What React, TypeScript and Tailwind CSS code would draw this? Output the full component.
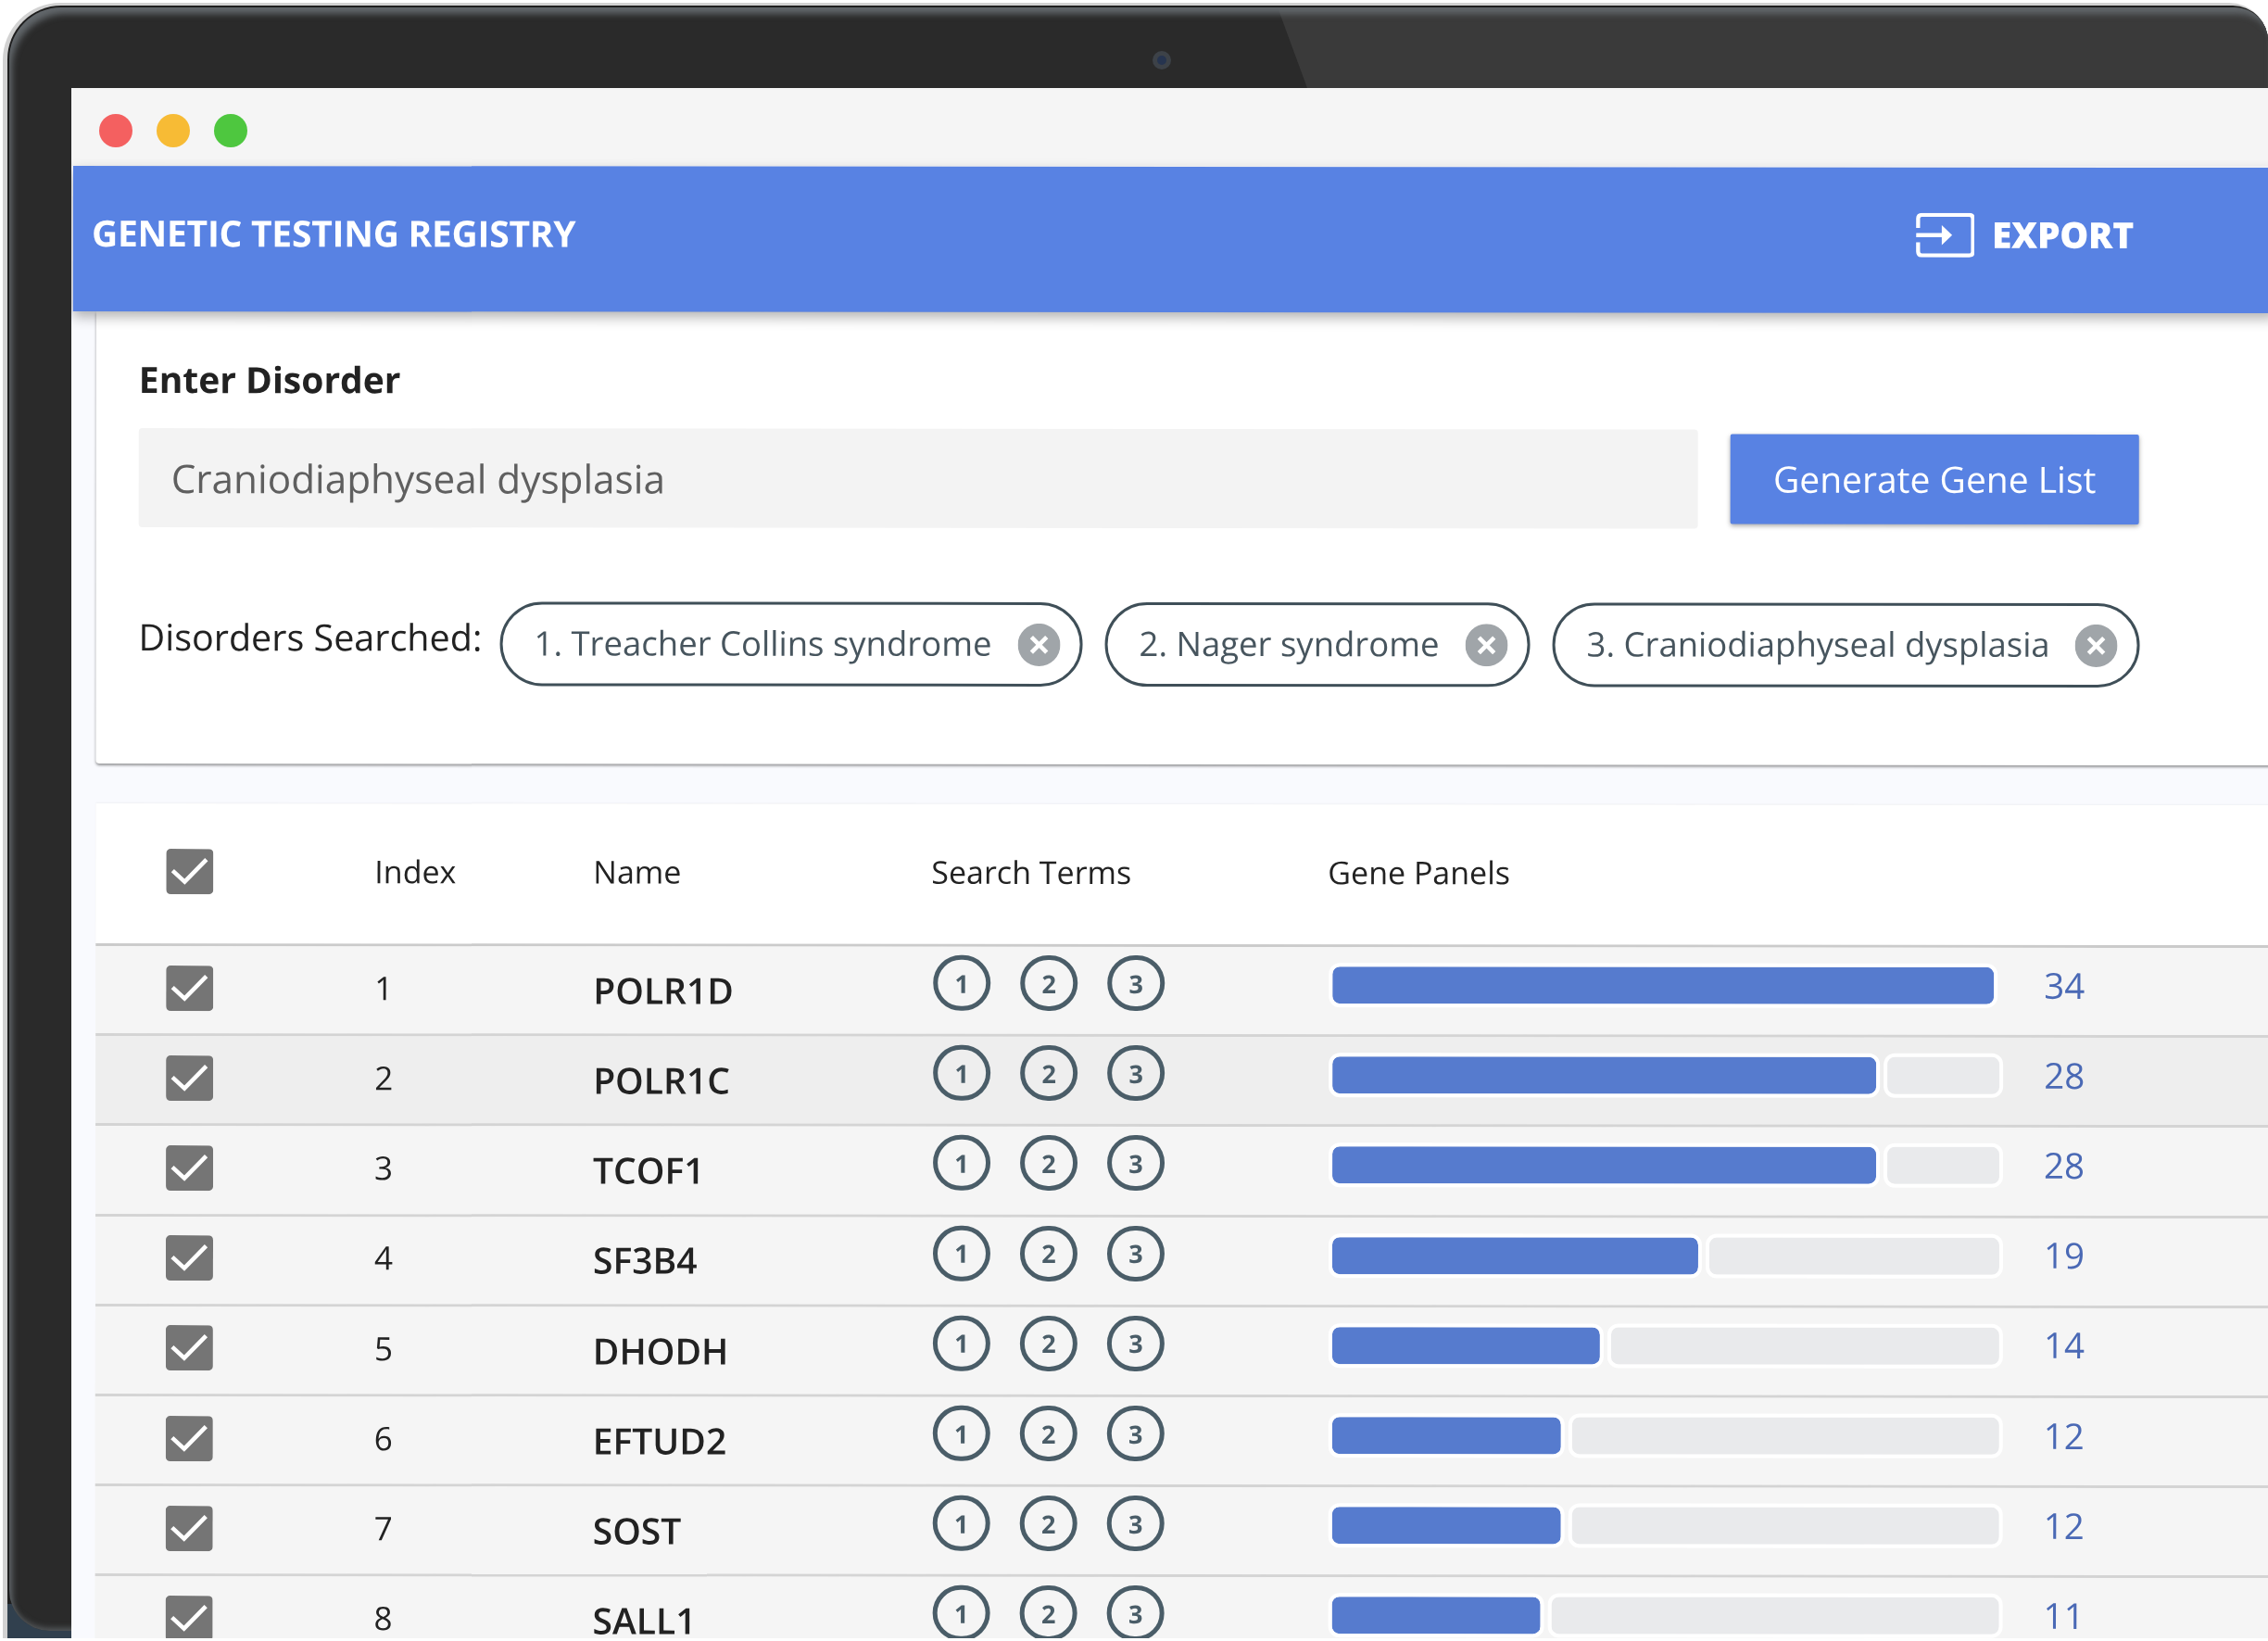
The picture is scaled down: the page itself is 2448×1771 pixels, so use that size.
import React from 'react';

const genes = [
  { name: 'POLR1D', panels: 34, fill: 714 },
  { name: 'POLR1C', panels: 28, fill: 587 },
  { name: 'TCOF1', panels: 28, fill: 587 },
  { name: 'SF3B4', panels: 19, fill: 395 },
  { name: 'DHODH', panels: 14, fill: 289 },
  { name: 'EFTUD2', panels: 12, fill: 247 },
  { name: 'SOST', panels: 12, fill: 247 },
  { name: 'SALL1', panels: 11, fill: 225 },
];

const chips = [
  { label: '1. Treacher Collins syndrome', width: 'w-[629px]' },
  { label: '2. Nager syndrome', width: 'w-[459px]' },
  { label: '3. Craniodiaphyseal dysplasia', width: 'w-[634px]' },
];

const Checkbox = () => (
  <svg viewBox="0 0 51 49" className="w-[51px] h-[49px] shrink-0">
    <rect width="51" height="49" rx="5" fill="#757575" />
    <path d="M7 23.5 L20 35.5 L43.5 11.5" fill="none" stroke="#fff" strokeWidth="4.6" />
  </svg>
);

const CloseIcon = () => (
  <svg viewBox="0 0 45 45" className="w-[46px] h-[46px] shrink-0">
    <circle cx="22.5" cy="22.5" r="22.5" fill="#a0a5a9" />
    <path d="M14.5 14.5 L30.5 30.5 M30.5 14.5 L14.5 30.5" stroke="#fff" strokeWidth="4.5" />
  </svg>
);

const ExportIcon = () => (
  <svg viewBox="0 0 61 47" className="w-[63px] h-[48px] shrink-0" fill="none">
    <path
      d="M2 16 V6 Q2 2 6 2 H56 Q60 2 60 6 V41 Q60 45 56 45 H6 Q2 45 2 41 V31"
      stroke="#fff"
      strokeWidth="4.2"
    />
    <path d="M0 23.5 H32" stroke="#fff" strokeWidth="4.2" />
    <path d="M27 13 L38 23.5 L27 34 Z" fill="#fff" />
  </svg>
);

const TermBadge = ({ n }: { n: number }) => (
  <div className="w-[62px] h-[60px] rounded-full border-[5px] border-[#4a5d68] flex items-center justify-center text-[27px] font-bold text-[#4a5d68] leading-none">
    {n}
  </div>
);

const App = () => {
  return (
    <div className="w-[2448px] h-[1771px] bg-white overflow-hidden font-['Open_Sans',sans-serif]">
      {/* laptop shell */}
      <div className="ml-[3px] mt-[3px] h-[1765px] pl-[5px] pt-[3px] bg-[#d2d2d2] rounded-tl-[62px] rounded-tr-[42px]">
        <div className="h-full pl-[2px] pt-[2px] rounded-tl-[58px] rounded-tr-[38px] bg-[linear-gradient(to_bottom,#1f1f1f_1725px,#31404e_1725px)]">
          <div className="relative h-[1752px] bg-[#2a2a2a] rounded-tl-[56px] rounded-tr-[36px] rounded-bl-[44px]">
            <div className="absolute left-[1360px] right-0 top-0 h-[87px] bg-[#3a3a3a] rounded-tr-[36px] [clip-path:polygon(9px_0,100%_0,100%_100%,41px_100%)]" />
            <div className="absolute left-[1234px] top-[47px] w-[20px] h-[20px] rounded-full bg-[#3d4248]">
              <div className="ml-[5px] mt-[5px] w-[10px] h-[10px] rounded-full bg-[#26344f]" />
            </div>
            <div className="absolute inset-0 rounded-tl-[56px] rounded-tr-[36px] rounded-bl-[44px] shadow-[inset_5px_9px_7px_-2px_#62676b,inset_0_-6px_6px_-3px_#55595c]" />

            {/* screen */}
            <div className="absolute left-[67px] top-[87px] w-[2371px] h-[1673px] overflow-hidden bg-[#f9fafe] blur-[0.5px]">
              <div className="h-[84px] bg-[#f5f5f5] flex items-center pl-[30px] pt-[8px] gap-[26px]">
                <div className="w-[36px] h-[36px] rounded-full bg-[#f46060]" />
                <div className="w-[36px] h-[36px] rounded-full bg-[#f7bb35]" />
                <div className="w-[36px] h-[36px] rounded-full bg-[#4ec73f]" />
              </div>

              <div className="rotate-[0.05deg] origin-top-left w-[2380px]">
                <header className="relative z-10 ml-[2px] h-[157px] bg-[#5882e3] shadow-[0_6px_14px_rgba(0,0,0,0.3)] flex items-center justify-between pl-[20px] pr-[154px] pb-[12px] text-white">
                  <h1 className="text-[39px] font-bold tracking-[-0.25px]">GENETIC TESTING REGISTRY</h1>
                  <div className="flex items-center gap-[19px]">
                    <ExportIcon />
                    <span className="text-[39px] font-extrabold tracking-[-0.3px]">EXPORT</span>
                  </div>
                </header>

                {/* search card */}
                <section className="ml-[27px] h-[488px] bg-white rounded-bl-[4px] shadow-[0_2px_3px_rgba(0,0,0,0.4)] pl-[46px] pt-[50px]">
                  <h2 className="h-[46px] leading-[46px] text-[39px] font-bold text-[#222]">Enter Disorder</h2>
                  <div className="mt-[30px] h-[107px] flex items-center gap-[35px]">
                    <div className="w-[1683px] h-[107px] rounded-[4px] bg-[#f3f3f3] flex items-center pl-[35px] text-[42.3px] text-[#5f5f5f]">
                      Craniodiaphyseal dysplasia
                    </div>
                    <button className="w-[441px] h-[97px] rounded-[2px] bg-[#5882e3] text-white text-[39px] font-medium shadow-[0_2px_5px_rgba(0,0,0,0.35)]">
                      Generate Gene List
                    </button>
                  </div>
                  <div className="mt-[80px] h-[91px] flex items-center">
                    <span className="w-[390px] text-[39.5px] text-[#222] pb-[13px]">Disorders Searched:</span>
                    <div className="flex items-center gap-[24px]">
                      {chips.map((chip) => (
                        <div
                          key={chip.label}
                          className={`${chip.width} h-[91px] rounded-full border-[3px] border-[#3f4f58] flex items-center justify-between pl-[34px] pr-[21px] text-[36.5px] text-[#47555e]`}
                        >
                          <span className="pb-[3px]">{chip.label}</span>
                          <CloseIcon />
                        </div>
                      ))}
                    </div>
                  </div>
                </section>

                {/* gene table */}
                <section className="ml-[27px] mt-[43px] bg-[#f5f5f5]">
                  <div className="h-[154px] bg-white border-b-[3px] border-[#cbcbcb] flex items-center pb-[4px] text-[34px] text-[#222] shadow-[0_-1px_2px_rgba(0,0,0,0.04)]">
                    <div className="w-[301px] pl-[76px]"><Checkbox /></div>
                    <div className="w-[236px]">Index</div>
                    <div className="w-[365px]">Name</div>
                    <div className="w-[428px]">Search Terms</div>
                    <div>Gene Panels</div>
                  </div>
                  {genes.map((gene, i) => (
                    <div
                      key={gene.name}
                      className={`h-[97.2px] border-b-[3px] border-[#d4d4d4] flex items-center ${i === 1 ? 'bg-[#eeeeee]' : 'bg-[#f5f5f5]'}`}
                    >
                      <div className="w-[301px] pl-[76px] pb-[4px]"><Checkbox /></div>
                      <div className="w-[236px] text-[35px] text-[#222] pb-[4px]">{i + 1}</div>
                      <div className="w-[365px] text-[39px] font-semibold text-[#222]">{gene.name}</div>
                      <div className="w-[428px] pl-[2px] pb-[16px] flex gap-[32px]">
                        <TermBadge n={1} />
                        <TermBadge n={2} />
                        <TermBadge n={3} />
                      </div>
                      <div className="ml-[1px] w-[728px] pb-[12px] flex gap-[4px]">
                        <div
                          className="box-content border-[4px] border-white rounded-[12px] bg-[#567bce] bg-clip-padding"
                          style={{ width: gene.fill, height: 40 }}
                        />
                        {gene.panels < 34 && (
                          <div
                            className="box-content border-[4px] border-white rounded-[12px] bg-[#e9eaec] bg-clip-padding"
                            style={{ width: 708 - gene.fill, height: 40 }}
                          />
                        )}
                      </div>
                      <div className="ml-[44px] pb-[13px] text-[38.5px] font-medium text-[#4a69b5]">{gene.panels}</div>
                    </div>
                  ))}
                </section>
              </div>
            </div>
          </div>
        </div>
      </div>
    </div>
  );
};

export default App;
